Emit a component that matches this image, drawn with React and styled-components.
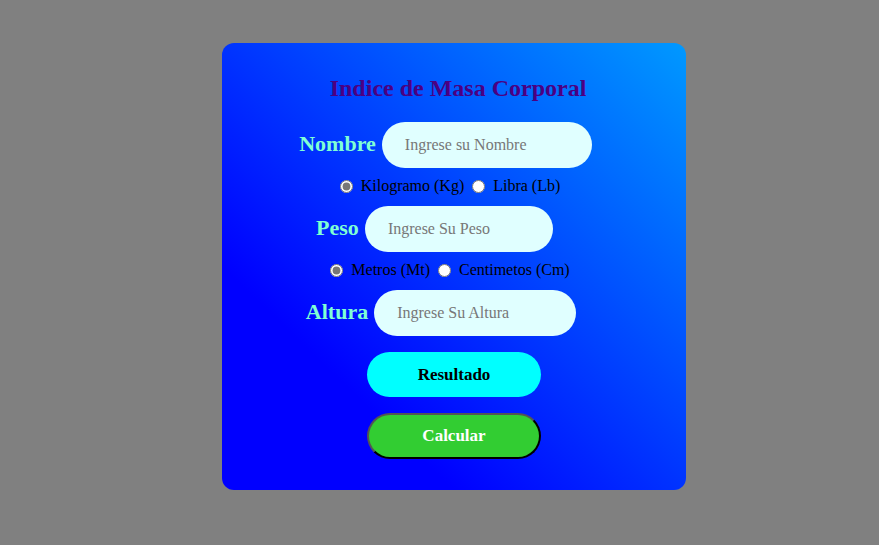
import React from 'react';
import styled, { createGlobalStyle } from 'styled-components';

const GlobalStyle = createGlobalStyle`
  html, body {
    margin: 0;
    padding: 0;
    background: #808080;
    font-family: "Liberation Serif", "Times New Roman", serif;
  }
`;

export default function App() {
  return (
    <>
      <GlobalStyle />
      <Page>
        <Card>
          <Title>Indice de Masa Corporal</Title>

          <FieldRow $shift={17}>
            <Label>Nombre</Label>
            <Field type="text" placeholder="Ingrese su Nombre" $w={210} />
          </FieldRow>

          <RadioRow $shift={16}>
            <Radio type="radio" name="peso" defaultChecked />
            <RadioText>Kilogramo (Kg)</RadioText>
            <Radio type="radio" name="peso" />
            <RadioText>Libra (Lb)</RadioText>
          </RadioRow>

          <FieldRow $shift={39}>
            <Label>Peso</Label>
            <Field type="text" placeholder="Ingrese Su Peso" $w={188} />
          </FieldRow>

          <RadioRow $shift={16}>
            <Radio type="radio" name="altura" defaultChecked />
            <RadioText>Metros (Mt)</RadioText>
            <Radio type="radio" name="altura" />
            <RadioText>Centimetos (Cm)</RadioText>
          </RadioRow>

          <FieldRow $shift={26}>
            <Label>Altura</Label>
            <Field type="text" placeholder="Ingrese Su Altura" $w={202} />
          </FieldRow>

          <ResultButton>Resultado</ResultButton>
          <CalcButton>Calcular</CalcButton>
        </Card>
      </Page>
    </>
  );
}

const Page = styled.div`
  width: 879px;
  height: 545px;
  display: flex;
  justify-content: center;
  align-items: flex-start;
  padding: 43px 0 0 29px;
  box-sizing: border-box;
`;

const Card = styled.div`
  width: 464px;
  height: 447px;
  box-sizing: border-box;
  border-radius: 12px;
  background: linear-gradient(to top right, #0000ff 25%, #0099ff 100%);
  display: flex;
  flex-direction: column;
  align-items: center;
  padding-top: 31px;
`;

const Title = styled.h2`
  margin: 0 0 20px;
  font-size: 24px;
  line-height: 28px;
  font-weight: bold;
  color: #4b0082;
  padding-left: 8px;
`;

const FieldRow = styled.div`
  display: flex;
  align-items: center;
  justify-content: center;
  gap: 6px;
  width: 100%;
  box-sizing: border-box;
  padding-right: ${p => p.$shift}px;
`;

const Label = styled.label`
  font-size: 22px;
  font-weight: bold;
  color: #7fffd4;
  margin-bottom: 3px;
`;

const Field = styled.input`
  width: ${p => p.$w}px;
  height: 46px;
  box-sizing: border-box;
  border: none;
  border-radius: 23px;
  background: #e0ffff;
  padding: 0 23px;
  font-family: "Liberation Serif", "Times New Roman", serif;
  font-size: 16px;
  outline: none;

  &::placeholder {
    color: #777;
  }
`;

const RadioRow = styled.div`
  display: flex;
  align-items: center;
  justify-content: center;
  width: 100%;
  box-sizing: border-box;
  padding-right: ${p => p.$shift}px;
  margin: 8px 0 10px;
  height: 20px;
`;

const Radio = styled.input`
  width: 13px;
  height: 13px;
  margin: 0 8px;
  accent-color: #777;
`;

const RadioText = styled.span`
  font-size: 16px;
  color: #000;
`;

const PillButton = styled.button`
  width: 174px;
  height: 45px;
  border-radius: 23px;
  font-family: "Liberation Serif", "Times New Roman", serif;
  font-size: 17px;
  font-weight: bold;
  cursor: pointer;
`;

const ResultButton = styled(PillButton)`
  margin-top: 16px;
  background: #00ffff;
  border: none;
  color: #000;
`;

const CalcButton = styled(PillButton)`
  margin-top: 16px;
  height: 46px;
  background: #32cd32;
  border: 2px outset #000;
  color: #fff;
`;
